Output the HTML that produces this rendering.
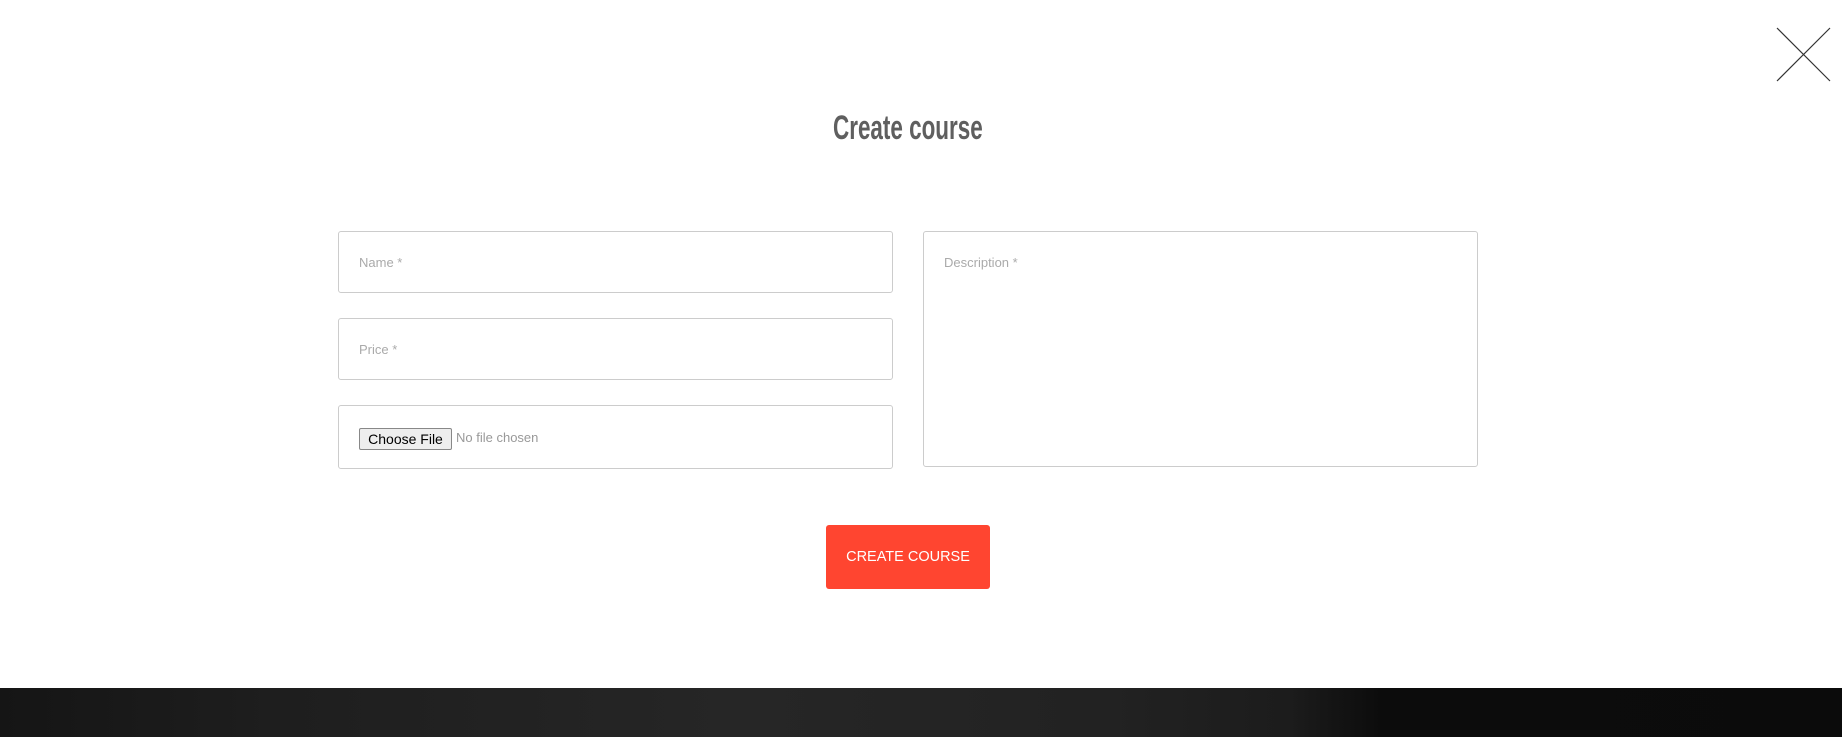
<!DOCTYPE html>
<html><head><style>
body{margin:0;width:1842px;height:737px;background:#fff;position:relative;overflow:hidden;font-family:"Liberation Sans",sans-serif}
.abs{position:absolute;box-sizing:border-box}
.box{border:1px solid #ccc;border-radius:3px;background:#fff}
.ph{position:absolute;left:20px;color:#aaa;font-size:13px}
h1{position:absolute;left:833px;top:109px;margin:0;font-size:34px;font-weight:bold;color:#5f5f5f;transform:scaleX(0.66);transform-origin:left top;white-space:nowrap;letter-spacing:0}
.btn{left:826px;top:525px;width:164px;height:64px;background:#ff4530;border-radius:3px;color:#fff;font-size:14.5px;text-align:center;line-height:64px}
.band{left:0;top:688px;width:1842px;height:49px;background:linear-gradient(90deg,#151515 0%,#1e1e1e 15%,#262626 40%,#222 60%,#1c1c1c 70%,#0c0c0c 75%,#0b0b0b 100%)}
</style></head><body>
<svg class="abs" style="left:1776px;top:27px" width="55" height="55"><path d="M1 1L54 54M54 1L1 54" stroke="#333" stroke-width="1.2"/></svg>
<h1>Create course</h1>
<div class="abs box" style="left:338px;top:231px;width:555px;height:62px"><span class="ph" style="top:23px">Name *</span></div>
<div class="abs box" style="left:338px;top:318px;width:555px;height:62px"><span class="ph" style="top:23px">Price *</span></div>
<div class="abs box" style="left:338px;top:405px;width:555px;height:64px">
<span class="abs" style="left:20px;top:22px;width:93px;height:22px;border:1px solid #888;background:#eee;border-radius:2px;font-size:14px;color:#000;text-align:center;line-height:20px">Choose File</span>
<span class="ph" style="left:117px;top:24px;color:#999">No file chosen</span></div>
<div class="abs box" style="left:923px;top:231px;width:555px;height:236px"><span class="ph" style="top:23px">Description *</span></div>
<div class="abs btn">CREATE COURSE</div>
<div class="abs band"></div>
</body></html>
